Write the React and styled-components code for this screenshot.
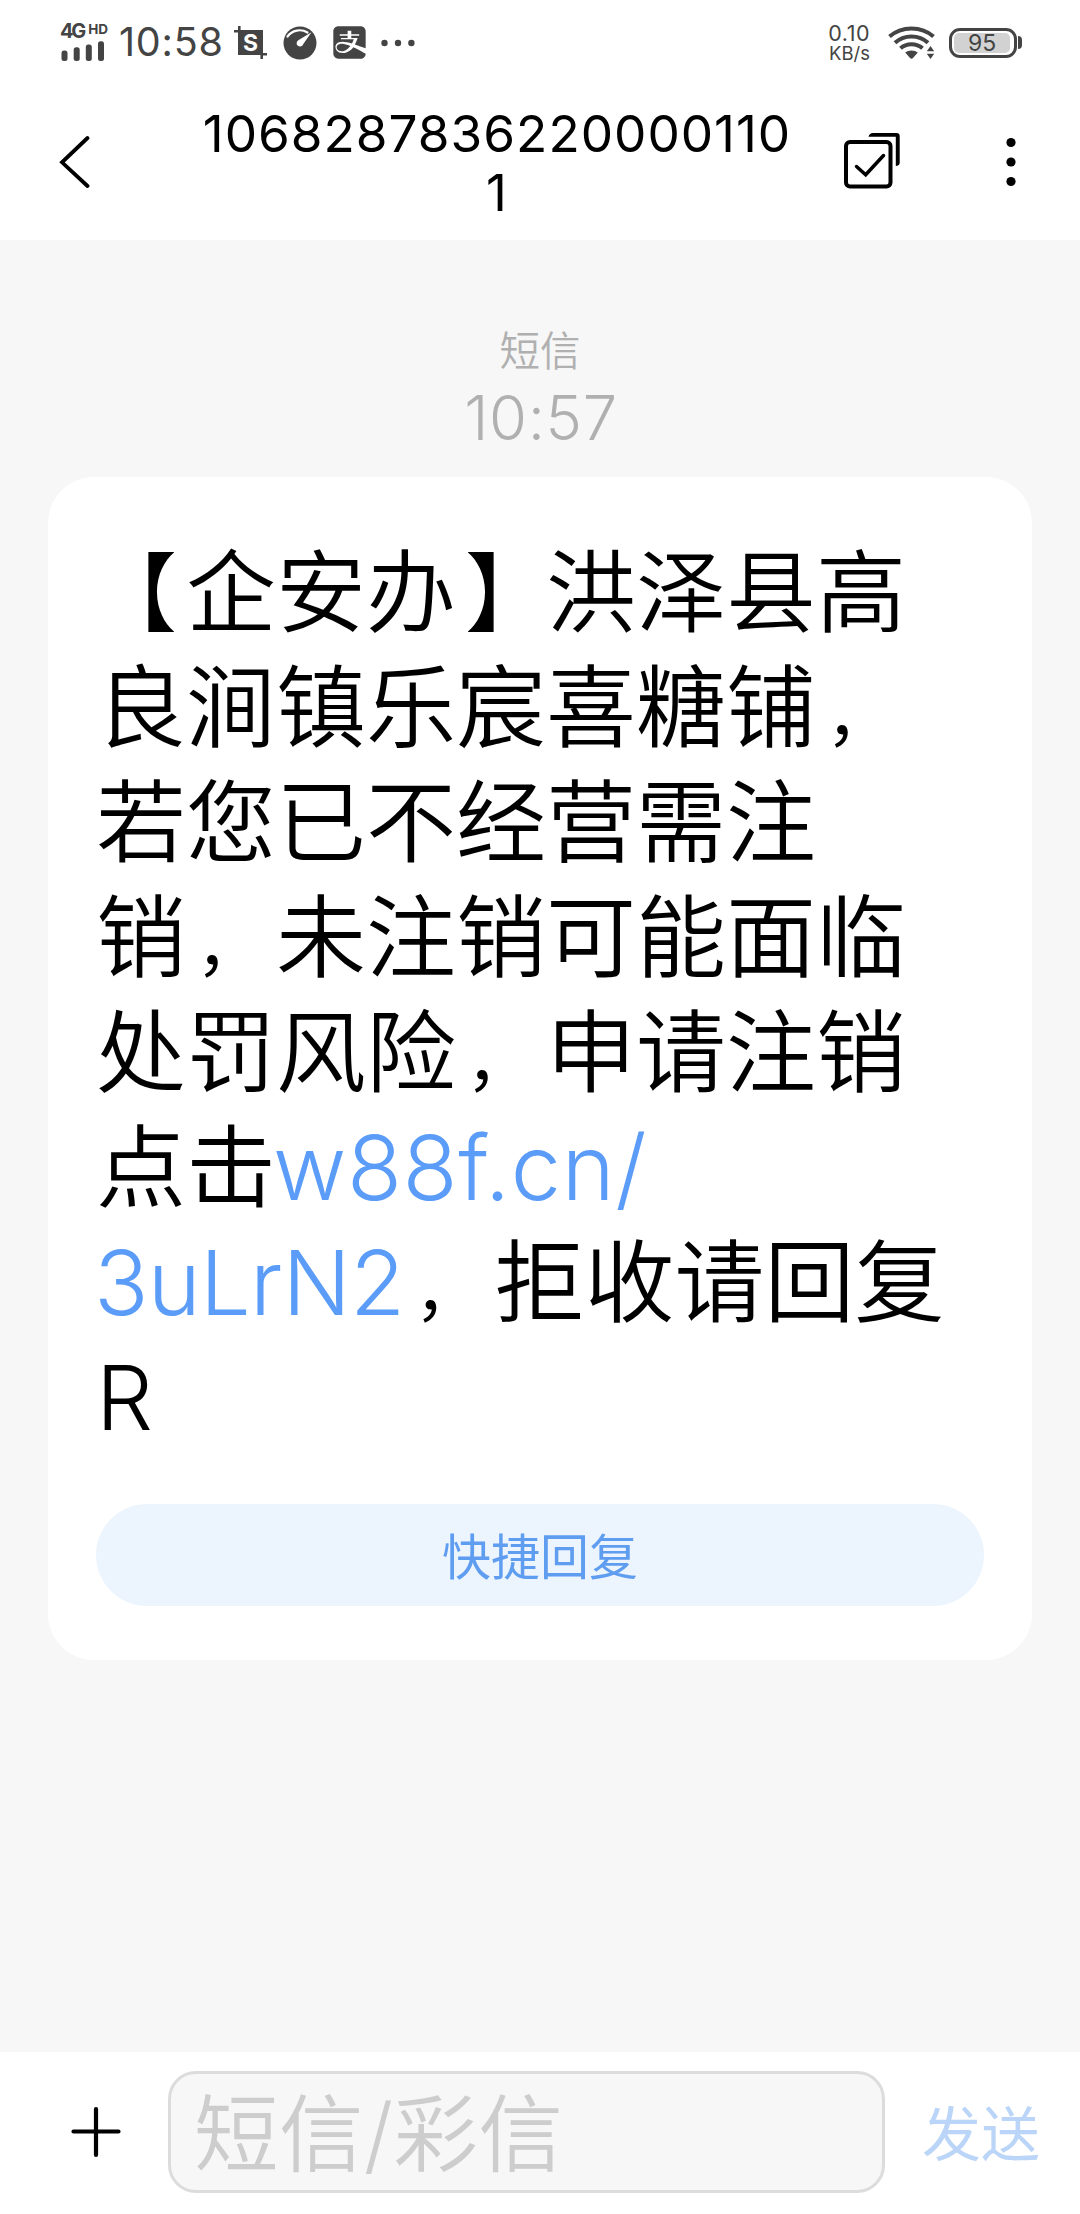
import React from "react";
import styled, { createGlobalStyle } from "styled-components";
import { FaAlipay } from "react-icons/fa";

const INK = "#444444";

const GlobalStyle = createGlobalStyle`
  * { box-sizing: border-box; }
  body {
    margin: 0;
    background: #f7f7f7;
    font-family: Inter, "Noto Sans CJK SC", sans-serif;
    text-spacing-trim: space-all;
  }
`;

const Screen = styled.main`
  display: flex;
  flex-direction: column;
  width: 1080px;
  height: 2214px;
  overflow: hidden;
  background: #f7f7f7;
`;

const StatusBar = styled.div`
  display: flex;
  justify-content: space-between;
  align-items: flex-start;
  height: 84px;
  padding: 18px 58px 0 60px;
  background: #fff;
  color: ${INK};
`;

const StatusGroup = styled.div`
  display: flex;
  align-items: center;
  height: 49px;
`;

const Signal = styled.div`
  display: flex;
  flex-direction: column;
  width: 48px;
  height: 37px;
  margin-top: -1px;
`;

const Network = styled.div`
  display: flex;
  align-items: flex-start;
  height: 17px;
  font-size: 20px;
  line-height: 15px;
  font-weight: 700;
  letter-spacing: -2.2px;
  sup {
    margin-left: 4px;
    font-size: 13.5px;
    line-height: 10px;
    letter-spacing: 0;
    vertical-align: baseline;
  }
`;

const Clock = styled.time`
  width: 102px;
  margin-left: 11px;
  font-size: 39.5px;
  line-height: 49px;
  letter-spacing: 0.8px;
  white-space: nowrap;
`;

const StatusIcon = styled.span`
  display: flex;
  margin-left: ${(p) => p.$gap}px;
`;

const Speed = styled.div`
  display: flex;
  flex-direction: column;
  align-items: flex-end;
  width: 44px;
  white-space: nowrap;
`;

const Rate = styled.span`
  font-size: 21.5px;
  line-height: 20px;
  letter-spacing: 0.5px;
`;

const Unit = styled.span`
  font-size: 18.5px;
  line-height: 20px;
`;

const Battery = styled.div`
  display: flex;
  align-items: center;
  margin-left: 14px;
  &::after {
    content: "";
    width: 4px;
    height: 13px;
    margin-left: 1px;
    border-radius: 0 4px 4px 0;
    background: ${INK};
  }
`;

const BatteryShell = styled.div`
  width: 68px;
  height: 30px;
  padding: 2px;
  border: 3.5px solid ${INK};
  border-radius: 11px;
`;

const BatteryLevel = styled.div`
  width: 56px;
  height: 20px;
  border-radius: 5px;
  background: #d2d2d2;
  font-size: 23px;
  line-height: 20px;
  text-align: center;
`;

const Header = styled.header`
  display: flex;
  align-items: flex-start;
  height: 156px;
  padding: 20px 0 0 56px;
  background: #fff;
`;

const IconButton = styled.button`
  display: flex;
  align-items: center;
  justify-content: center;
  flex: none;
  width: ${(p) => p.$w}px;
  height: ${(p) => p.$h}px;
  margin: ${(p) => p.$m || "0"};
  padding: 0;
  border: 0;
  background: none;
`;

const Title = styled.h1`
  width: 612px;
  margin: 0 0 0 101px;
  font-size: 51.3px;
  font-weight: 430;
  line-height: 58.7px;
  letter-spacing: 1px;
  text-align: center;
  color: #000;
`;

const Thread = styled.section`
  display: flex;
  flex-direction: column;
  flex: 1;
  padding: 88px 48px 0;
`;

const Stamp = styled.div`
  display: flex;
  flex-direction: column;
  align-items: center;
  height: 149px;
  color: #b0b0b0;
`;

const StampKind = styled.span`
  font-size: 40.5px;
  font-weight: 350;
  line-height: 48px;
`;

const StampTime = styled.time`
  margin-top: 12px;
  padding-left: 2px;
  font-size: 61.5px;
  font-weight: 330;
  line-height: 60px;
  letter-spacing: 0.6px;
`;

const Bubble = styled.article`
  height: 1183px;
  padding: 58px 48px 54px;
  border-radius: 46px;
  background: #fff;
`;

const Message = styled.p`
  margin: 0 0 49px;
  font-size: 90px;
  font-weight: 350;
  line-height: 115px;
  white-space: nowrap;
  color: #000;
`;

const Line = styled.span`
  display: block;
  height: 115px;
`;

const Comma = styled.span`
  display: inline-block;
  width: 90px;
  padding-left: 10px;
  font-size: 66px;
  font-weight: 400;
  line-height: 66px;
`;

const Bracket = styled.span`
  display: inline-block;
  width: 90px;
  font-size: 86px;
  line-height: 86px;
  text-indent: ${(p) => (p.$open ? "-5px" : "9px")};
`;

const Link = styled.a`
  margin-left: ${(p) => p.$pull}px;
  letter-spacing: ${(p) => p.$tracking}px;
  color: #5a9cf8;
  text-decoration: none;
`;

const QuickReply = styled.button`
  display: block;
  width: 100%;
  height: 102px;
  padding: 5px 0 0;
  border: 0;
  border-radius: 51px;
  background: #ecf4fe;
  color: #5f9df0;
  font: 400 49px/97px Inter, "Noto Sans CJK SC", sans-serif;
`;

const Composer = styled.footer`
  display: flex;
  height: 162px;
  padding-top: 19px;
  background: #fff;
`;

const Field = styled.div`
  width: 717px;
  height: 122px;
  padding: 2px 0 0 23px;
  border: 3px solid #dcdcdc;
  border-radius: 28px;
  background: #f7f7f7;
  color: #cdcdcd;
  font-size: 84.5px;
  font-weight: 350;
  line-height: 116px;
  letter-spacing: 0.4px;
  white-space: nowrap;
`;

const Send = styled.button`
  height: 122px;
  margin-left: 37px;
  padding: 5px 0 0;
  border: 0;
  background: none;
  color: #bbd5f8;
  font: 400 59px/117px Inter, "Noto Sans CJK SC", sans-serif;
`;

function SignalBars() {
  return (
    <svg width="48" height="20" viewBox="0 0 48 20" fill={INK}>
      <rect x="1.5" y="9.5" width="6" height="10.5" rx="2.5" />
      <rect x="13.7" y="6.3" width="6" height="13.7" rx="2.5" />
      <rect x="25.8" y="3.6" width="6" height="16.4" rx="2.5" />
      <rect x="38" y="0.3" width="6" height="19.7" rx="2.5" />
    </svg>
  );
}

function CropIcon() {
  return (
    <svg width="34" height="34" viewBox="0 0 34 34">
      <path d="M4 0h2.6v4H29v23h4v2.6h-4V33h-2.6v-4H4V6.600H0V4h4z" fill={INK} />
      <text x="16.600" y="25" fontSize="23" fontWeight="700" textAnchor="middle" fill="#fff">S</text>
    </svg>
  );
}

function GaugeIcon() {
  return (
    <svg width="34" height="34" viewBox="0 0 34 34">
      <circle cx="17" cy="17" r="16.5" fill={INK} />
      <path d="M4.500 10.500C9 4 18 2.500 24.500 6.500" fill="none" stroke="#fff" strokeWidth="2.2" strokeLinecap="round" />
      <path d="M28.500 6.200 L20.300 18 A3.400 3.400 0 1 1 15.300 14.200 Z" fill="#fff" />
    </svg>
  );
}

function DotsIcon() {
  return (
    <svg width="34" height="8" viewBox="0 0 34 8" fill={INK}>
      <circle cx="3.500" cy="4" r="3.200" />
      <circle cx="17" cy="4" r="3.200" />
      <circle cx="30.400" cy="4" r="3.200" />
    </svg>
  );
}

function WifiIcon() {
  return (
    <svg width="47" height="34" viewBox="0 0 47 34">
      <g fill="none" stroke={INK} strokeWidth="4">
        <path d="M1.500 10.500C13.500 -0.300 33.500 -0.300 45.500 10.500" />
        <path d="M7 16.800C16 8.300 31 8.300 40 16.800" />
        <path d="M12.500 22.300C18.500 16.800 28.500 16.800 34.500 22.300" />
      </g>
      <path d="M17.200 26.600C20.500 23.700 26.500 23.700 29.800 26.600L25 32Q23.500 33.500 22 32Z" fill={INK} />
      <path d="M42.500 20l3.700 5.300h-7.400zM42.500 33l3.700-5.300h-7.400z" fill={INK} />
    </svg>
  );
}

function BackIcon() {
  return (
    <svg width="34" height="54" viewBox="0 0 34 54" fill="none" stroke="#000" strokeWidth="3.800" strokeLinecap="round">
      <path d="M31.500 3L6 27.300L31.500 51" />
    </svg>
  );
}

function SelectIcon() {
  return (
    <svg width="60" height="60" viewBox="0 0 60 60" fill="none" stroke="#000" strokeWidth="4">
      <rect x="3" y="12" width="44.500" height="44.500" rx="4" />
      <path d="M12 22.500L21.200 30.800L39 11.500" transform="translate(1.500 14)" strokeWidth="3.500" strokeLinecap="round" />
      <path d="M25.500 6.700Q26.500 3 30 3H53.500Q56.700 3 56.700 6.200V33Q56.500 35.500 52.800 36V6.700Z" fill="#000" stroke="none" />
    </svg>
  );
}

function MoreIcon() {
  return (
    <svg width="12" height="52" viewBox="0 0 12 52">
      <circle cx="6" cy="6.500" r="4.600" />
      <circle cx="6" cy="26" r="4.600" />
      <circle cx="6" cy="45.500" r="4.600" />
    </svg>
  );
}

function PlusIcon() {
  return (
    <svg width="52" height="52" viewBox="0 0 52 52" stroke="#000" strokeWidth="4.200" strokeLinecap="round">
      <path d="M3.500 25.500H48.500M26 3V49" />
    </svg>
  );
}

export default function App() {
  return (
    <Screen>
      <GlobalStyle />
      <StatusBar>
        <StatusGroup>
          <Signal>
            <Network>4G<sup>HD</sup></Network>
            <SignalBars />
          </Signal>
          <Clock>10:58</Clock>
          <StatusIcon $gap={13}><CropIcon /></StatusIcon>
          <StatusIcon $gap={15}><GaugeIcon /></StatusIcon>
          <StatusIcon $gap={14}><FaAlipay size={37} /></StatusIcon>
          <StatusIcon $gap={13}><DotsIcon /></StatusIcon>
        </StatusGroup>
        <StatusGroup>
          <Speed>
            <Rate>0.10</Rate>
            <Unit>KB/s</Unit>
          </Speed>
          <StatusIcon $gap={18}><WifiIcon /></StatusIcon>
          <Battery>
            <BatteryShell><BatteryLevel>95</BatteryLevel></BatteryShell>
          </Battery>
        </StatusGroup>
      </StatusBar>
      <Header>
        <IconButton $w={34} $h={54} $m="31px 0 0" aria-label="返回"><BackIcon /></IconButton>
        <Title>1068287836220000110<br />1</Title>
        <IconButton $w={60} $h={60} $m="26px 0 0 40px" aria-label="选择"><SelectIcon /></IconButton>
        <IconButton $w={24} $h={52} $m="32px 0 0 96px" aria-label="更多"><MoreIcon /></IconButton>
      </Header>
      <Thread>
        <Stamp>
          <StampKind>短信</StampKind>
          <StampTime>10:57</StampTime>
        </Stamp>
        <Bubble>
          <Message>
            <Line><Bracket $open>【</Bracket>企安办<Bracket>】</Bracket>洪泽县高</Line>
            <Line>良涧镇乐宸喜糖铺<Comma>，</Comma></Line>
            <Line>若您已不经营需注</Line>
            <Line>销<Comma>，</Comma>未注销可能面临</Line>
            <Line>处罚风险<Comma>，</Comma>申请注销</Line>
            <Line>点击<Link $pull={-3} $tracking={0.6}>w88f.cn/</Link></Line>
            <Line><Link $pull={-2} $tracking={-0.8}>3uLrN2</Link><Comma>，</Comma>拒收请回复</Line>
            <Line>R</Line>
          </Message>
          <QuickReply>快捷回复</QuickReply>
        </Bubble>
      </Thread>
      <Composer>
        <IconButton $w={52} $h={52} $m="35px 46px 0 70px" aria-label="添加"><PlusIcon /></IconButton>
        <Field>短信/彩信</Field>
        <Send>发送</Send>
      </Composer>
    </Screen>
  );
}
